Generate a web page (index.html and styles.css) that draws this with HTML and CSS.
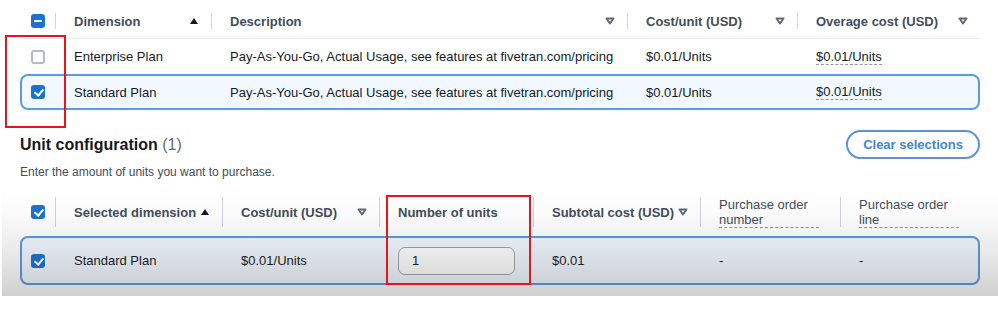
FILE: index.html
```html
<!DOCTYPE html>
<html lang="en">
<head>
<meta charset="utf-8">
<link rel="stylesheet" href="styles.css">
</head>
<body>
<div class="page">
  <div class="grid grid-top head">
    <div class="cell cb"><span class="check indet"></span></div>
    <div class="cell hd sep">Dimension <svg class="sort" viewBox="0 0 10 8"><path d="M1 7 L5 1 L9 7 Z" fill="#16191f"/></svg></div>
    <div class="cell hd sep">Description <svg class="sort" viewBox="0 0 10 8"><path d="M1.5 1.5 L8.5 1.5 L5 6.5 Z" fill="none" stroke="#5f6b7a" stroke-width="2" stroke-linejoin="round"/></svg></div>
    <div class="cell hd sep">Cost/unit (USD) <svg class="sort" viewBox="0 0 10 8"><path d="M1.5 1.5 L8.5 1.5 L5 6.5 Z" fill="none" stroke="#5f6b7a" stroke-width="2" stroke-linejoin="round"/></svg></div>
    <div class="cell hd sep">Overage cost (USD) <svg class="sort" viewBox="0 0 10 8"><path d="M1.5 1.5 L8.5 1.5 L5 6.5 Z" fill="none" stroke="#5f6b7a" stroke-width="2" stroke-linejoin="round"/></svg></div>
  </div>
  <div class="grid grid-top row">
    <div class="cell cb"><span class="check"></span></div>
    <div class="cell">Enterprise Plan</div>
    <div class="cell">Pay-As-You-Go, Actual Usage, see features at fivetran.com/pricing</div>
    <div class="cell">$0.01/Units</div>
    <div class="cell"><span class="dotted">$0.01/Units</span></div>
  </div>
  <div class="grid grid-top-sel row selected">
    <div class="cell cb"><span class="check on"></span></div>
    <div class="cell">Standard Plan</div>
    <div class="cell">Pay-As-You-Go, Actual Usage, see features at fivetran.com/pricing</div>
    <div class="cell">$0.01/Units</div>
    <div class="cell"><span class="dotted">$0.01/Units</span></div>
  </div>

  <div class="section-head">
    <div class="titles">
      <h2 class="title">Unit configuration <span class="count">(1)</span></h2>
      <p class="desc">Enter the amount of units you want to purchase.</p>
    </div>
    <button class="clear">Clear selections</button>
  </div>

  <div class="grid grid-bot head2">
    <div class="cell cb"><span class="check on"></span></div>
    <div class="cell hd sep">Selected dimension <svg class="sort" viewBox="0 0 10 8"><path d="M1 7 L5 1 L9 7 Z" fill="#16191f"/></svg></div>
    <div class="cell hd sep">Cost/unit (USD) <svg class="sort" viewBox="0 0 10 8"><path d="M1.5 1.5 L8.5 1.5 L5 6.5 Z" fill="none" stroke="#5f6b7a" stroke-width="2" stroke-linejoin="round"/></svg></div>
    <div class="cell hd sep">Number of units</div>
    <div class="cell hd sep">Subtotal cost (USD) <svg class="sort" viewBox="0 0 10 8"><path d="M1.5 1.5 L8.5 1.5 L5 6.5 Z" fill="none" stroke="#5f6b7a" stroke-width="2" stroke-linejoin="round"/></svg></div>
    <div class="cell hd sep two"><span class="dotted-h">Purchase order number</span></div>
    <div class="cell hd sep two"><span class="dotted-h">Purchase order line</span></div>
  </div>
  <div class="grid grid-bot-sel row2 selected">
    <div class="cell cb"><span class="check on"></span></div>
    <div class="cell">Standard Plan</div>
    <div class="cell">$0.01/Units</div>
    <div class="cell"><div class="input">1</div></div>
    <div class="cell">$0.01</div>
    <div class="cell">-</div>
    <div class="cell">-</div>
  </div>

  <div class="shade"></div>
  <div class="mark mark1"></div>
  <div class="mark mark2"></div>
</div>
</body>
</html>
```

FILE: styles.css
```css
* { box-sizing: border-box; }
html, body { margin: 0; padding: 0; background: #fff; }
body {
  font-family: "Liberation Sans", Arial, sans-serif;
  font-size: 13px;
  color: #16191f;
  width: 998px;
  height: 312px;
  overflow: hidden;
}
.page {
  position: relative;
  padding: 0 18px 0 20px;
  height: 312px;
}
.grid { display: grid; align-items: center; }
.grid-top { grid-template-columns: 35px 156px 416px 170px 183px; }
.grid-top-sel { grid-template-columns: 33px 156px 416px 170px 181px; }
.grid-bot { grid-template-columns: 35px 167px 157px 154px 167px 140px 140px; }
.grid-bot-sel { grid-template-columns: 33px 167px 157px 154px 167px 140px 138px; }

.cell { padding-left: 19px; display: flex; align-items: center; white-space: nowrap; }
.cell.cb { padding-left: 11px; }

.head { height: 39px; border-bottom: 1px solid #e9ebed; padding-top: 4px; }
.hd { font-weight: bold; color: #414d5c; position: relative; padding-right: 12px; }
.sep::before {
  content: ""; position: absolute; left: 0; top: 50%; width: 1px; height: 16px;
  margin-top: -8px; background: #d1d5db;
}
.sort { width: 10px; height: 8px; margin-left: auto; }

.row { height: 35px; }
.row.selected, .row2.selected {
  border: 2px solid #5b9be0;
  border-radius: 8px;
  background: #f1f8ff;
}
.row.selected { height: 36px; }
.selected .cell.cb { padding-left: 9px; }

.dotted { border-bottom: 1px dashed #8d99a8; line-height: 15px; }

.check {
  width: 14px; height: 14px; border-radius: 3px;
  border: 2px solid #b5bac0; background: #fff; display: inline-block; position: relative;
}
.check.on, .check.indet { background: #1a73d0; border-color: #1a73d0; }
.check.on::after {
  content: ""; position: absolute; left: 3px; top: 0px; width: 4px; height: 7px;
  border: solid #fff; border-width: 0 2px 2px 0; transform: rotate(40deg);
}
.check.indet::after {
  content: ""; position: absolute; left: 1px; top: 4px; width: 8px; height: 2px; background: #fff;
}

.section-head {
  display: flex; justify-content: space-between; align-items: flex-start;
  padding-top: 20px; height: 81px;
}
.title { margin: 0; font-size: 16px; font-weight: bold; line-height: 20px; color: #16191f; margin-top: 5px; }
.count { font-weight: normal; color: #5f6b7a; }
.desc { margin: 10px 0 0; font-size: 12px; color: #414d5c; line-height: 14px; }
.clear {
  font-family: inherit; font-size: 13px; font-weight: bold; color: #3e86d6;
  background: #fff; border: 2px solid #5b93d6; border-radius: 16px;
  width: 134px; height: 29px; margin-top: 0; padding: 0;
}

.head2 { height: 42px; }
.head2 .sep::before { height: 30px; margin-top: -15px; }
.hd.two { white-space: normal; line-height: 15px; font-weight: normal; color: #414d5c; }
.dotted-h { border-bottom: 1px dashed #8d99a8; display: inline-block; width: 100px; }

.row2 { height: 49px; margin-top: 3px; }
.input {
  width: 117px; height: 28px; border: 1px solid #9ba3ad; border-radius: 7px;
  background: #fff; padding-left: 13px; display: flex; align-items: center;
}

.shade {
  position: absolute; left: 2px; right: 0; top: 188px; height: 108px;
  background: linear-gradient(to bottom, rgba(0,0,0,0) 0%, rgba(0,0,0,0.02) 25%, rgba(40,40,40,0.1) 60%, rgba(40,40,40,0.22) 100%);
  pointer-events: none;
}
.mark { position: absolute; border: 2px solid #e8161b; pointer-events: none; }
.mark1 { left: 5px; top: 35px; width: 61px; height: 93px; }
.mark2 { left: 386px; top: 195px; width: 145px; height: 90px; }
```
